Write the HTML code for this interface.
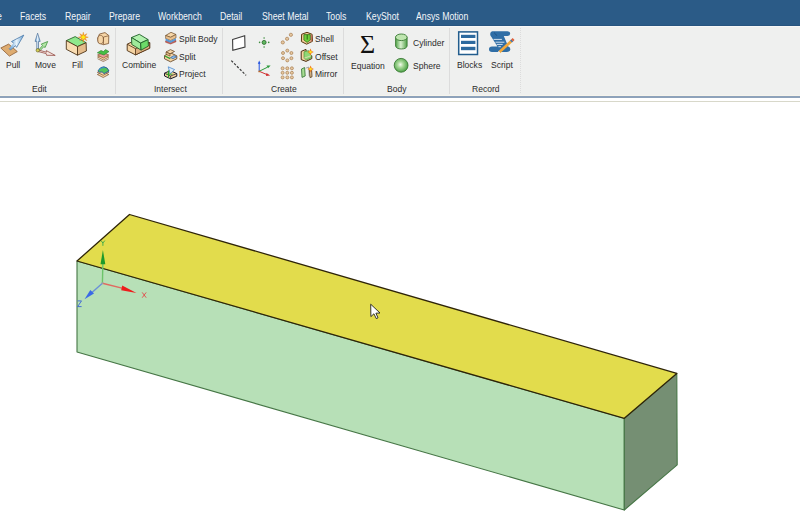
<!DOCTYPE html>
<html><head><meta charset="utf-8">
<style>
html,body{margin:0;padding:0;width:800px;height:523px;overflow:hidden;background:#fff;font-family:"Liberation Sans",sans-serif;}
#tabs{position:absolute;left:0;top:0;width:800px;height:26px;background:#2b5b87;box-shadow:inset 0 -1px 0 #27547f;}
#ribbon{position:absolute;left:0;top:26px;width:800px;height:69px;background:#eff0ef;box-shadow:inset 0 1px 0 #f7f7f7;}
.t{position:absolute;color:#f4f6f9;font-size:10.2px;line-height:10px;white-space:nowrap;transform:scaleX(0.855);transform-origin:0 0;}
.l{position:absolute;color:#2c2c2c;font-size:9.8px;line-height:10px;white-space:nowrap;transform:scaleX(0.872);transform-origin:0 0;}
.sep{position:absolute;top:28px;width:1px;height:66px;background:#dcdcdc;}
svg{position:absolute;overflow:visible;}
</style></head><body>
<div id="tabs"></div>
<div id="ribbon"></div>
<div class="t" style="left:-2.8px;top:12px">e</div>
<div class="t" style="left:20px;top:12px">Facets</div>
<div class="t" style="left:64.5px;top:12px">Repair</div>
<div class="t" style="left:109px;top:12px">Prepare</div>
<div class="t" style="left:158px;top:12px">Workbench</div>
<div class="t" style="left:220px;top:12px">Detail</div>
<div class="t" style="left:262px;top:12px">Sheet Metal</div>
<div class="t" style="left:325.5px;top:12px">Tools</div>
<div class="t" style="left:365.5px;top:12px">KeyShot</div>
<div class="t" style="left:415.5px;top:12px">Ansys Motion</div>


<div style="position:absolute;left:0;top:95px;width:800px;height:1px;background:#f6f4ec"></div>
<div style="position:absolute;left:0;top:96px;width:800px;height:2px;background:#8ea2ba"></div>
<div style="position:absolute;left:0;top:101px;width:800px;height:1.3px;background:#d8d8ca"></div>

<div class="sep" style="left:115px"></div>
<div class="sep" style="left:222px"></div>
<div class="sep" style="left:343px"></div>
<div class="sep" style="left:449px"></div>
<div class="sep" style="left:520px;background:repeating-linear-gradient(#dcdcdc 0 1px,transparent 1px 2px)"></div>

<!-- labels -->
<div class="l" style="left:6.3px;top:60.3px">Pull</div>
<div class="l" style="left:35px;top:60.3px">Move</div>
<div class="l" style="left:72px;top:60.3px">Fill</div>
<div class="l" style="left:32px;top:84px">Edit</div>
<div class="l" style="left:122.2px;top:60.3px">Combine</div>
<div class="l" style="left:178.8px;top:34.3px">Split Body</div>
<div class="l" style="left:178.8px;top:51.9px">Split</div>
<div class="l" style="left:178.8px;top:69.2px">Project</div>
<div class="l" style="left:153.7px;top:84px">Intersect</div>
<div class="l" style="left:315px;top:34.3px">Shell</div>
<div class="l" style="left:315px;top:51.8px">Offset</div>
<div class="l" style="left:315px;top:69px">Mirror</div>
<div class="l" style="left:271.2px;top:84px">Create</div>
<div class="l" style="left:350.8px;top:61.1px">Equation</div>
<div class="l" style="left:412.5px;top:38.2px">Cylinder</div>
<div class="l" style="left:412.5px;top:61.1px">Sphere</div>
<div class="l" style="left:387.3px;top:84.2px">Body</div>
<div class="l" style="left:456.5px;top:60.3px">Blocks</div>
<div class="l" style="left:490.9px;top:60.3px">Script</div>
<div class="l" style="left:472.3px;top:83.8px">Record</div>


<!-- ribbon icons -->
<svg style="left:0;top:0" width="800" height="100" viewBox="0 0 800 100">
 <defs>
  <linearGradient id="blueArr" x1="0" y1="0" x2="1" y2="0">
   <stop offset="0" stop-color="#5d9bd3"/><stop offset="0.5" stop-color="#e8f3fb"/><stop offset="1" stop-color="#6aa6d8"/>
  </linearGradient>
  <radialGradient id="sph" cx="0.45" cy="0.45" r="0.6">
   <stop offset="0" stop-color="#f4fbef"/><stop offset="0.35" stop-color="#a9d99a"/><stop offset="1" stop-color="#3f9a3a"/>
  </radialGradient>
  <linearGradient id="cyl" x1="0" y1="0" x2="1" y2="0">
   <stop offset="0" stop-color="#4fa447"/><stop offset="0.45" stop-color="#d9f0cf"/><stop offset="1" stop-color="#4e9f45"/>
  </linearGradient>
 </defs>
 <!-- Pull -->
 <polygon points="0.8,48 8.6,44.1 17.3,51.6 9.4,56.1" fill="#deac70" stroke="#8b5b30" stroke-width="0.8"/>
 <path d="M9.1,48.6 L10.5,50 L15.5,45.6 L16.6,47.4 L23.8,35.1 L11.5,41.5 L13.6,43" fill="url(#blueArr)" stroke="#4a78a8" stroke-width="0.8" stroke-linejoin="round"/>
 <!-- Move -->
 <polygon points="36.8,49 38.5,49 38.5,41.4 40.2,41.4 37.6,33.2 35.1,41.4 36.8,41.4" fill="url(#blueArr)" stroke="#4a6f98" stroke-width="0.7" stroke-linejoin="round"/>
 <polygon points="38.2,50.6 39.2,51.6 43.7,46.8 45.2,47.4 47.7,41.5 41.3,44.1 42.5,45.6" fill="#b5e6a8" stroke="#2f8a2f" stroke-width="0.7" stroke-linejoin="round"/>
 <polygon points="38.6,50 38.4,51.6 46.2,53.6 46.6,55.3 55.2,55.4 46.3,50.6 46.4,52.2" fill="#f6e4e0" stroke="#8a3a30" stroke-width="0.7" stroke-linejoin="round"/>
 <circle cx="37.8" cy="50.3" r="1.7" fill="#d6cf5a" stroke="#5a5a1a" stroke-width="0.6"/>
 <!-- Fill -->
 <polygon points="66.3,40.6 75.2,36.6 86.1,42.7 77.5,46.6" fill="#8ee88c" stroke="#2f6a30" stroke-width="0.9"/>
 <polygon points="66.3,40.6 77.5,46.6 77.5,55.2 66.3,49.3" fill="#f8dcb2" stroke="#4e3418" stroke-width="0.9"/>
 <polygon points="77.5,46.6 86.1,42.7 86.4,51 77.5,55.2" fill="#e4bc8c" stroke="#4e3418" stroke-width="0.9"/>
 <g transform="translate(83.3,37.2)">
  <polygon points="0.00,-5.00 0.77,-1.85 3.54,-3.54 1.85,-0.77 5.00,0.00 1.85,0.77 3.54,3.54 0.77,1.85 0.00,5.00 -0.77,1.85 -3.54,3.54 -1.85,0.77 -5.00,0.00 -1.85,-0.77 -3.54,-3.54 -0.77,-1.85" fill="#f39a22" stroke="#e0861a" stroke-width="0.4"/>
  <polygon points="0,-2.3 2.3,0 0,2.3 -2.3,0" fill="#ffea10"/>
 </g>
 <!-- small edit icons -->
 <path d="M99.5,34 L105,32.6 L108.8,35.5 L108.6,43.5 L103.5,44.7 L98.4,42.8 L97.5,38.5 Z" fill="#f6d6a8" stroke="#7a5230" stroke-width="0.8"/>
 <ellipse cx="100.6" cy="39.6" rx="2.8" ry="4.2" fill="#f6d6a8" stroke="#7a5230" stroke-width="0.7"/>
 <path d="M103.5,37 L108.5,35.8 M103.5,37 L103.5,44.5" stroke="#7a5230" stroke-width="0.7" fill="none"/>
 <path d="M97.5,57 L103,54.5 L108.8,57 L103.3,60 Z" fill="#f4d3a2" stroke="#8a5a30" stroke-width="0.7"/>
 <path d="M97.5,58.7 L103.3,61.5 L108.8,58.7" fill="none" stroke="#8a5a30" stroke-width="0.7"/>
 <path d="M97.5,55 L103,52.5 L108.8,55 L103.3,58 Z" fill="#e99a9a" stroke="#8a5a30" stroke-width="0.7"/>
 <path d="M97.3,52.8 L101,50.5 L103.5,51.6 L105.5,49.6 L109,51.6 L104,55 Z" fill="#45c045" stroke="#2a7a2a" stroke-width="0.6"/>
 <path d="M97.3,74.5 L103,71.8 L108.8,74.5 L103.2,77.5 Z" fill="#f4d3a2" stroke="#7a5230" stroke-width="0.7"/>
 <path d="M97.3,72.3 L103,69.8 L108.8,72.3 L103.2,75.3 Z" fill="#f4d3a2" stroke="#7a5230" stroke-width="0.7"/>
 <path d="M98,70.8 Q100.5,66.5 104,66.8 Q107.8,67.3 109,71 L104,73.6 Q102.5,71 99.5,72.2 Z" fill="#52c45a" stroke="#24549a" stroke-width="0.9"/>
 <path d="M99,69.5 Q101.5,67.2 104.5,67.6" stroke="#3a8ad8" stroke-width="1" fill="none"/>
 <!-- Combine -->
 <polygon points="127.2,44.2 132.5,41.6 149.7,42.6 149.7,48.2 135.5,54.9 127.2,50.6" fill="#f4d3a2" stroke="#4a2c10" stroke-width="0.9" stroke-linejoin="round"/>
 <polygon points="135.5,48.7 135.5,54.9 149.7,48.2 149.7,42.6" fill="#dfb282" stroke="#4a2c10" stroke-width="0.8"/>
 <path d="M127.2,44.2 L135.5,48.7" stroke="#4a2c10" stroke-width="0.8"/>
 <polygon points="131.5,37.5 139.3,34.3 148.1,39.6 140.6,43.1" fill="#b2f2ae" stroke="#1f5f28" stroke-width="0.9"/>
 <polygon points="131.5,37.5 140.6,43.1 141.1,50.1 131.8,44.5" fill="#9fea9a" stroke="#1f5f28" stroke-width="0.9"/>
 <polygon points="140.6,43.1 148.1,39.6 148.4,46.1 141.1,50.1" fill="#6cdc68" stroke="#1f5f28" stroke-width="0.9"/>
 <!-- Split Body -->
 <polygon points="165.6,35.5 171,32.3 176,34.5 170.6,37.3" fill="#f6d6a8" stroke="#6a4a28" stroke-width="0.7"/>
 <polygon points="165.6,35.5 170.6,37.3 176,34.5 176,38 170.6,40.5 165.6,38.5" fill="#e8c08e" stroke="#6a4a28" stroke-width="0.6"/>
 <polygon points="165.6,38.5 170.6,40.8 176,38.2 176,40.5 170.6,43 165.6,41" fill="#5a9ad8"/>
 <polygon points="165.6,41 170.6,43.2 176,40.6 176,41.8 170.6,44 165.6,42.3" fill="#e0605a" stroke="#8a3a30" stroke-width="0.5"/>
 <!-- Split -->
 <polygon points="164.5,55.5 170.5,52.8 176.8,55.8 176.8,58.8 170.5,61.8 164.5,58.8" fill="#f4d3a2" stroke="#5a3a18" stroke-width="0.8"/>
 <polygon points="166,52 170.5,49.6 174.5,51.5 170,53.8" fill="#f6d6a8" stroke="#5a3a18" stroke-width="0.7"/>
 <polygon points="166,52 170,53.8 170,56 166,54.3" fill="#e8c08e" stroke="#5a3a18" stroke-width="0.6"/>
 <polygon points="170.5,57.5 174,55.6 176.5,56.8 173,58.7" fill="#8ec0ec" stroke="#2f5f9f" stroke-width="0.7"/>
 <path d="M164.8,56 L170.3,58.6" stroke="#2fa02f" stroke-width="1.3"/>
 <!-- Project -->
 <polygon points="164.5,73.2 170.3,70.6 176.8,73.6 176.8,76.2 170.6,78.8 164.5,76" fill="#f1cf9c" stroke="#1a1a2a" stroke-width="1"/>
 <path d="M164.5,73.2 L170.6,76 L176.8,73.6 M170.6,76 L170.6,78.8" fill="none" stroke="#1a1a2a" stroke-width="0.7"/>
 <path d="M168.2,66.8 L174.6,69.6 L170.2,73.8 Z" fill="#dcebf8" stroke="#4a8ad0" stroke-width="0.8"/>
 <path d="M168.6,70.5 L168.6,77.5" stroke="#23a023" stroke-width="1.1"/>
 <path d="M166.2,74.2 L172.5,74.2" stroke="#23a023" stroke-width="0.9"/>
 <!-- Plane -->
 <polygon points="232.6,39.6 244.7,35.7 245,47 232.8,50.3" fill="#ffffff" stroke="#3c3c3c" stroke-width="1.1"/>
 <!-- dashed line -->
 <line x1="231.3" y1="60.6" x2="246.1" y2="75.4" stroke="#3a3a3a" stroke-width="1.2" stroke-dasharray="2.4,1.6"/>
 <!-- point -->
 <circle cx="264.1" cy="42.4" r="2" fill="#5fb85f" stroke="#2f6f2f" stroke-width="0.9"/>
 <circle cx="264.1" cy="38" r="0.8" fill="#3f8f3f"/><circle cx="264.1" cy="47" r="0.8" fill="#3f8f3f"/>
 <circle cx="259.6" cy="42.4" r="0.8" fill="#3f8f3f"/><circle cx="268.7" cy="42.4" r="0.8" fill="#3f8f3f"/>
 <!-- axes -->
 <path d="M259.2,71.3 L259.2,63" stroke="#2050e0" stroke-width="1"/><polygon points="257.8,63.8 260.6,63.8 259.2,60.4" fill="#2050e0"/>
 <path d="M259.2,71.3 L267.5,67.2" stroke="#2a9a3a" stroke-width="1"/><polygon points="266.5,65.6 268,68.3 270.6,65.6" fill="#2a9a3a"/>
 <path d="M259.2,71.3 L267,74.6" stroke="#d03030" stroke-width="1"/><polygon points="266.5,73 266,76 270.2,75.6" fill="#d03030"/>
 <circle cx="259.2" cy="71.4" r="0.9" fill="#c06a2a"/>
 <!-- dots -->
 <g fill="#e6c8a0" stroke="#a87c50" stroke-width="0.7">
  <circle cx="282.8" cy="42.4" r="1.6"/><circle cx="287.1" cy="38.8" r="1.6"/><circle cx="290.9" cy="34.8" r="1.6"/>
  <circle cx="287.3" cy="50.6" r="1.5"/><circle cx="291.4" cy="53" r="1.5"/><circle cx="291.4" cy="58.2" r="1.5"/>
  <circle cx="287.3" cy="60.4" r="1.5"/><circle cx="283" cy="58.2" r="1.5"/><circle cx="283" cy="53" r="1.5"/>
  <circle cx="282.6" cy="68.3" r="1.5"/><circle cx="287.3" cy="68.3" r="1.5"/><circle cx="291.9" cy="68.3" r="1.5"/>
  <circle cx="282.6" cy="72.8" r="1.5"/><circle cx="287.3" cy="72.8" r="1.5"/><circle cx="291.9" cy="72.8" r="1.5"/>
  <circle cx="282.6" cy="77.4" r="1.5"/><circle cx="287.3" cy="77.4" r="1.5"/><circle cx="291.9" cy="77.4" r="1.5"/>
 </g>
 <!-- Shell -->
 <polygon points="307,32.3 312.1,34.3 312.5,41.3 306.6,44.2 301.4,41.6 301.6,34.3" fill="#f0c898" stroke="#5a3a12" stroke-width="1"/>
 <polygon points="310.6,35 312,34.6 312.2,41 310.6,42" fill="#c87060"/>
 <path d="M303.9,34.6 L310.3,34.6 L310.3,40 L307.1,42.4 L303.9,40 Z" fill="#6fcf3a" stroke="#2a6a12" stroke-width="0.7"/>
 <path d="M307.2,34.8 L307.2,39.6" stroke="#245a10" stroke-width="0.9"/>
 <!-- Offset -->
 <path d="M301.2,51.4 L306,49.4 L306.5,57.2 L311.8,55.8 L311.8,58.6 L306,61.4 L301.2,59.6 Z" fill="#f6d4a2" stroke="#4a2e10" stroke-width="1"/>
 <path d="M304,51.8 L308.5,50.6 L311.2,55.6 L311.2,58 L306.5,59.8 L304,58.4 Z" fill="#8ed876" stroke="#3f8a2a" stroke-width="0.6"/>
 <path d="M304.2,58.2 L311,55.8" stroke="#f6e0c0" stroke-width="0.7"/>
 <polygon points="310.5,48.6 311.6,50.9 313.9,52 311.6,53.1 310.5,55.4 309.4,53.1 307.1,52 309.4,50.9" fill="#f07a20"/>
 <circle cx="310.5" cy="52" r="1.3" fill="#ffe020"/>
 <!-- Mirror -->
 <polygon points="301.5,69 304.6,67.5 305.2,76 302,77.4" fill="#a6dc92" stroke="#2f6f2f" stroke-width="0.8"/>
 <path d="M305.8,68.2 L308.6,67 M308.6,67 L309.2,76.2" fill="none" stroke="#7a7a7a" stroke-width="0.6"/>
 <polygon points="309.5,69.5 311.5,68.8 312,76.8 310,77.5" fill="#f4d3a2" stroke="#4a2e10" stroke-width="0.8"/>
 <polygon points="310.6,65.6 311.7,67.9 314,69 311.7,70.1 310.6,72.4 309.5,70.1 307.2,69 309.5,67.9" fill="#f07a20"/>
 <circle cx="310.6" cy="69" r="1.3" fill="#ffe020"/>
 <!-- Cylinder -->
 <path d="M395.6,37.3 L395.6,46 A5.8,3.4 0 0 0 407.1,46 L407.1,37.3 Z" fill="url(#cyl)" stroke="#3a7a34" stroke-width="0.9"/>
 <ellipse cx="401.3" cy="37.3" rx="5.8" ry="3.3" fill="#bfe6b0" stroke="#3a7a34" stroke-width="0.9"/>
 <!-- Sphere -->
 <circle cx="401.1" cy="65.3" r="6.9" fill="url(#sph)" stroke="#3a7a34" stroke-width="0.9"/>
 <!-- Blocks -->
 <rect x="458.7" y="31.9" width="18.8" height="22.6" fill="#ffffff" stroke="#225d8e" stroke-width="1.5"/>
 <rect x="461" y="34.8" width="14.4" height="3.2" fill="#2d6a9f"/>
 <rect x="461" y="40.8" width="14.4" height="3.2" fill="#2d6a9f"/>
 <rect x="461" y="46.8" width="14.4" height="3.4" fill="#2d6a9f"/>
 <!-- Script -->
 <path d="M492.3,31.2 L507.5,31.2 Q510.2,31.4 510.2,33.6 Q510,36 507.5,36 L503.8,36 L508.2,46.4 Q510.4,46.8 510.4,49.2 Q510.2,51.9 507,51.9 L492,51.9 Q489,51.9 489,49.2 Q489,46.5 492,46.4 L497.4,46.4 L491.6,37.2 Q490,35.6 490.2,33.8 Q490.5,31.2 492.3,31.2 Z" fill="#2f6ea6"/>
 <path d="M494,32.6 Q495.8,33.8 496.8,35.8" stroke="#1d4f80" stroke-width="0.8" fill="none"/>
 <path d="M493.5,39.4 L501.9,39.4 M495.5,42.2 L504.4,42.2 M496.7,44.4 L502.7,44.4 M498.4,46.7 L500.9,46.7" stroke="#e6eef6" stroke-width="0.9"/>
 <path d="M499.2,52.3 L511.2,41.3" stroke="#f3a83a" stroke-width="2.8"/>
 <path d="M511,41.5 L512.2,40.4" stroke="#3f74a8" stroke-width="2.8"/>
 <path d="M512.1,40.5 L513.6,39.1" stroke="#e0603a" stroke-width="2.8"/>
 <path d="M498.2,53.3 L499.6,52" stroke="#f4f4f4" stroke-width="2.4"/>
 <!-- Sigma -->
</svg>
<div style="position:absolute;left:360px;top:32px;font-family:'Liberation Serif',serif;font-size:26px;line-height:26px;color:#111">&#931;</div>

<!-- 3D box -->
<svg style="left:0;top:0" width="800" height="523" viewBox="0 0 800 523">
  <polygon points="77,261 624.3,418.3 624.3,510 77,352" fill="#b7e0b7" stroke="#467646" stroke-width="1.1" stroke-linejoin="round"/>
  <polygon points="624.3,418.3 676.8,373.4 677.2,464.8 624.3,510" fill="#758f73" stroke="#467646" stroke-width="1.1" stroke-linejoin="round"/>
  <polygon points="77,261 129.5,214.5 676.8,373.4 624.3,418.3" fill="#e2dc4c" stroke="#2e2408" stroke-width="1.3" stroke-linejoin="round"/>
  <!-- triad -->
  <line x1="102.4" y1="283.2" x2="102.9" y2="262" stroke="#6cc46a" stroke-width="1.4"/>
  <polygon points="102.9,250 100.5,264.3 105.3,264.3" fill="#1e9a2a"/>
  <line x1="102.4" y1="283.2" x2="124" y2="288.6" stroke="#e06a60" stroke-width="1.4"/>
  <polygon points="136.5,292.9 122.2,285.5 121.2,290.2" fill="#ee1c1c"/>
  <line x1="102.4" y1="283.2" x2="92" y2="292.5" stroke="#6a90d8" stroke-width="1.4"/>
  <polygon points="84.5,299.3 90.3,290 94,293.6" fill="#3a6ae6"/>
  <circle cx="102.4" cy="283.2" r="1" fill="#9aa0a8"/>
  <path d="M101,240.6 L102.9,243 L104.8,240.6 M102.9,243 L102.9,245.8" stroke="#34a84a" stroke-width="0.9" fill="none"/>
  <path d="M142.2,292.4 L146.2,297.7 M146.2,292.4 L142.2,297.7" stroke="#e24a4a" stroke-width="0.9" fill="none"/>
  <path d="M77.6,300.9 L81.5,300.9 L77.6,306.6 L81.6,306.6" stroke="#3a62d8" stroke-width="0.9" fill="none"/>
  <!-- cursor -->
  <path d="M370.7,304.2 L370.9,316.6 L373.9,313.8 L376.3,318.6 L378,317.8 L375.9,313.2 L380,313 Z" fill="#ffffff" stroke="#202020" stroke-width="0.9" stroke-linejoin="round"/>
</svg>
</body></html>
